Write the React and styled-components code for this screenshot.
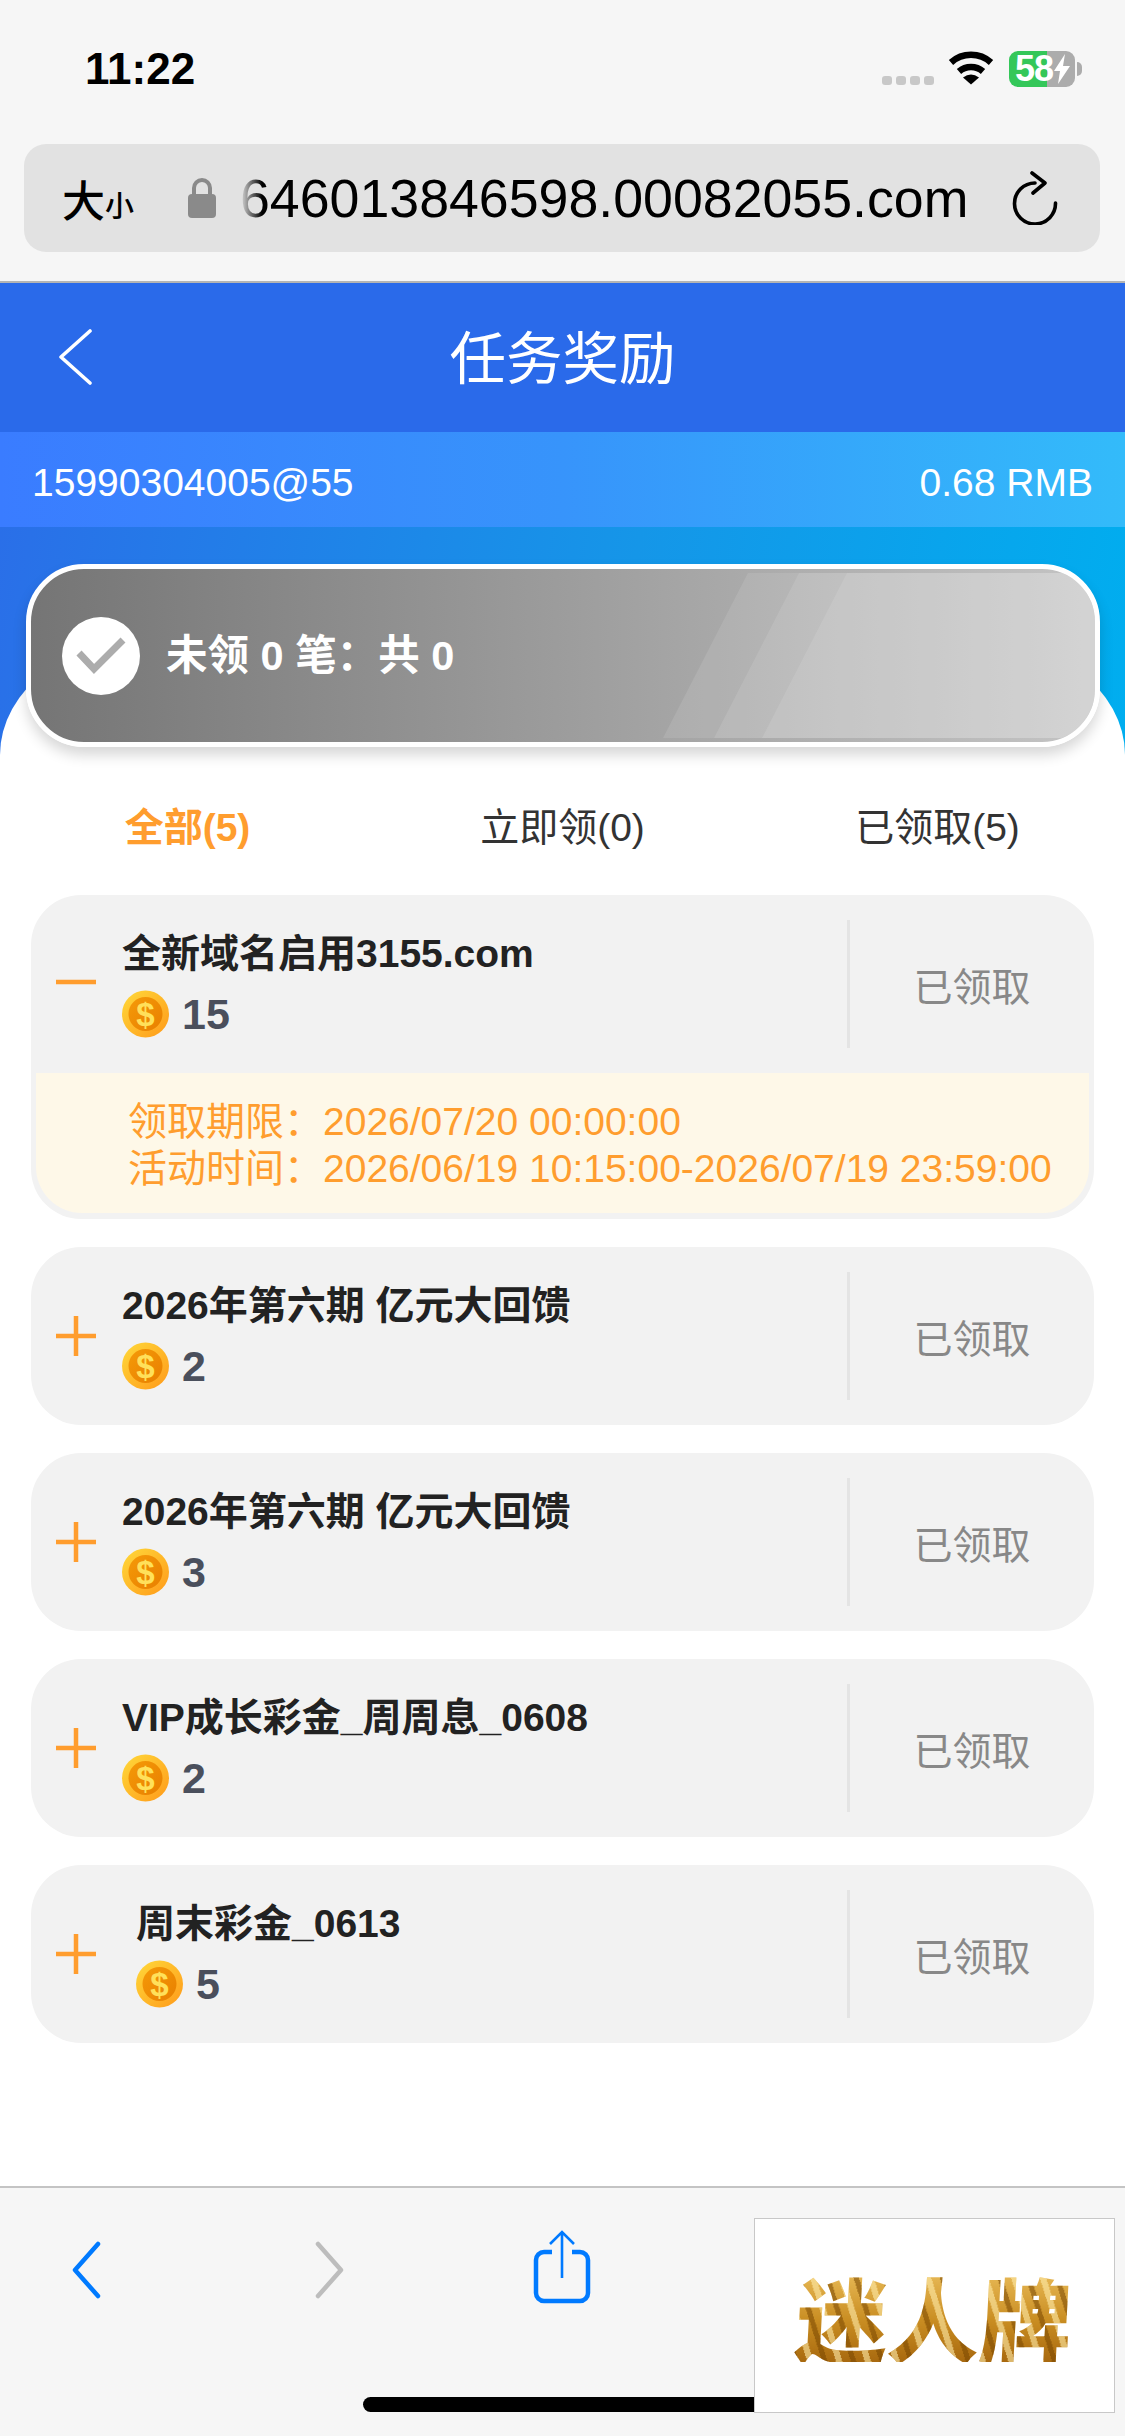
import React from 'react';
import styled, { createGlobalStyle } from 'styled-components';

const GlobalStyle = createGlobalStyle`
  html, body {
    margin: 0;
    padding: 0;
    background: #fff;
  }
  * {
    box-sizing: border-box;
  }
`;

const FONT = `"Liberation Sans", "Noto Sans CJK SC", sans-serif`;
const ORANGE = '#ff9d2e';

const Page = styled.div`
  position: relative;
  width: 1125px;
  height: 2436px;
  overflow: hidden;
  display: flex;
  flex-direction: column;
  background: #fff;
  font-family: ${FONT};
  font-size: 39px;
`;

// browser chrome
const Chrome = styled.header`
  height: 283px;
  padding: 0 25px 30px 24px;
  background: #f6f6f6;
  border-bottom: 2px solid #b4b4b4;
  display: flex;
  flex-direction: column;
`;

const StatusBar = styled.div`
  height: 144px;
  flex: none;
  padding: 51px 25px 0 61px;
  display: flex;
  align-items: flex-start;
  justify-content: space-between;
`;

const Clock = styled.div`
  font-size: 44px;
  font-weight: 700;
  line-height: 36px;
  color: #000;
`;

const StatusIcons = styled.div`
  display: flex;
  align-items: flex-start;
`;

const SignalDots = styled.div`
  display: flex;
  gap: 4px;
  margin: 25px 14px 0 0;
`;

const SignalDot = styled.span`
  width: 10px;
  height: 9px;
  border-radius: 3px;
  background: #c8c8c8;
`;

const Battery = styled.div`
  position: relative;
  width: 66px;
  height: 36px;
  margin: 0 0 0 15px;
  border-radius: 9px;
  padding-left: 6px;
  display: flex;
  align-items: center;
  background: linear-gradient(90deg, #34c759 0 38px, #acacac 38px);
  color: #fff;
  font-size: 36px;
  font-weight: 700;
  letter-spacing: -1px;

  &::after {
    content: '';
    position: absolute;
    top: 11px;
    right: -7px;
    width: 5px;
    height: 14px;
    border-radius: 0 5px 5px 0;
    background: #acacac;
  }
`;

const UrlBar = styled.div`
  height: 108px;
  flex: none;
  padding: 0 26px 0 38px;
  display: flex;
  align-items: center;
  border-radius: 22px;
  background: #e2e2e2;
`;

const TextSize = styled.div`
  width: 126px;
  flex: none;
  display: flex;
  align-items: baseline;
  color: #000;
  font-size: 43px;
  font-weight: 500;
`;

const TextSizeSmall = styled.span`
  font-size: 29px;
`;

const UrlText = styled.div`
  width: 744px;
  margin-left: 24px;
  flex: none;
  font-size: 53.7px;
  white-space: nowrap;
  color: #000;
  -webkit-mask-image: linear-gradient(90deg, transparent 0, #000 22px);
  mask-image: linear-gradient(90deg, transparent 0, #000 22px);
`;

const Reload = styled.svg`
  margin-left: 28px;
  flex: none;
`;

// page header
const TitleBar = styled.div`
  height: 149px;
  flex: none;
  padding: 0 0 7px 57px;
  position: relative;
  display: flex;
  align-items: center;
  justify-content: center;
  background: #2a6aea;
`;

const BackLink = styled.svg`
  position: absolute;
  left: 57px;
  top: 46px;
`;

const Title = styled.h1`
  margin: 0 57px 0 0;
  font-size: 56.5px;
  font-weight: 400;
  color: #fff;
`;

const AccountBar = styled.div`
  height: 95px;
  flex: none;
  padding: 6px 32px 0 32px;
  display: flex;
  align-items: center;
  justify-content: space-between;
  color: #fff;
  background: linear-gradient(90deg, #3a7cff 0%, #3794fb 50%, #33bbfa 100%);
`;

const Hero = styled.section`
  height: 233px;
  flex: none;
  padding: 37px 25px 0 26px;
  background: linear-gradient(100deg, #2a6fe8 0%, #1596e8 55%, #00aeef 100%);
`;

const SummaryShell = styled.div`
  position: relative;
  z-index: 1;
  border-radius: 58px;
  box-shadow: 0 8px 14px rgba(0, 0, 0, 0.16);
`;

const SummaryCard = styled.div`
  position: relative;
  height: 183px;
  padding-left: 31px;
  display: flex;
  align-items: center;
  gap: 26px;
  overflow: hidden;
  border: 5px solid #fff;
  border-radius: 58px;
  background: linear-gradient(90deg, #757575 0%, #a6a6a6 62%, #c4c4c4 100%);
  color: #fff;
  font-size: 41.5px;
  font-weight: 700;
`;

const Sheen = styled.span`
  position: absolute;
  top: 4px;
  bottom: 4px;
  left: ${({ $left }) => $left}px;
  right: 0;
  clip-path: polygon(85px 0, 100% 0, 100% 100%, 0 100%);
  background: rgba(255, 255, 255, 0.1);
`;

const CheckCircle = styled.div`
  width: 78px;
  height: 78px;
  flex: none;
  display: flex;
  align-items: center;
  justify-content: center;
  border-radius: 50%;
  background: #fff;
`;

const SummaryText = styled.span`
  position: relative;
  top: -4px;
  white-space: pre;
`;

// white sheet under the hero
const Sheet = styled.main`
  margin-top: -125px;
  padding-top: 142px;
  flex: 1;
  border-radius: 160px 160px 0 0 / 120px 120px 0 0;
  background: #fff;
`;

const Tabs = styled.nav`
  height: 94px;
  margin-bottom: 24px;
  display: grid;
  grid-template-columns: repeat(3, 1fr);
`;

const Tab = styled.div`
  display: flex;
  align-items: center;
  justify-content: center;
  color: ${({ $active }) => ($active ? ORANGE : '#333')};
  font-weight: ${({ $active }) => ($active ? 700 : 400)};
`;

const List = styled.div`
  padding: 0 31px;
  display: flex;
  flex-direction: column;
  gap: 28px;
`;

const Card = styled.article`
  border-radius: 50px;
  background: #f2f2f2;
  padding-bottom: ${({ $open }) => ($open ? 6 : 0)}px;
`;

const CardHead = styled.div`
  height: 178px;
  display: flex;
  align-items: center;
`;

const Toggle = styled.svg`
  width: 40px;
  height: 40px;
  flex: none;
  margin: 0 0 0 25px;
`;

const CardBody = styled.div`
  width: 751px;
  flex: none;
  padding-left: ${({ $indent }) => 26 + $indent}px;
  display: flex;
  flex-direction: column;
  gap: 12px;
`;

const CardTitle = styled.div`
  height: 48px;
  line-height: 48px;
  font-weight: 700;
  color: #222;
  white-space: pre;
`;

const Reward = styled.div`
  height: 48px;
  display: flex;
  align-items: center;
  gap: 13px;
  font-size: 43px;
  font-weight: 700;
  color: #4a4f5c;
`;

const Claim = styled.div`
  flex: 1;
  height: 128px;
  display: flex;
  align-items: center;
  justify-content: center;
  border-left: 3px solid #e4e4e4;
  color: #888;
`;

const Details = styled.div`
  margin: 0 5px;
  padding: 25px 0 21px 92px;
  border-radius: 0 0 46px 46px;
  background: #fef8e8;
  color: ${ORANGE};
  line-height: 47px;
  white-space: pre;
`;

// browser toolbar
const Toolbar = styled.footer`
  height: 250px;
  flex: none;
  padding: 43px 0 0 70px;
  display: flex;
  align-items: flex-start;
  border-top: 2px solid #c4c4c4;
  background: #f6f6f6;
`;

const ToolIcon = styled.svg`
  flex: none;
  margin-left: ${({ $gap }) => $gap}px;
  margin-top: ${({ $top }) => $top}px;
`;

const HomeIndicator = styled.div`
  position: absolute;
  left: 363px;
  top: 2397px;
  width: 400px;
  height: 15px;
  border-radius: 8px;
  background: #000;
`;

const AdBox = styled.aside`
  position: absolute;
  left: 754px;
  top: 2218px;
  width: 361px;
  height: 195px;
  display: flex;
  align-items: center;
  justify-content: center;
  border: 1px solid #c8c8c8;
  background: #fff;
`;

const AdText = styled.span`
  font-family: "Noto Sans CJK SC", sans-serif;
  font-size: 92px;
  font-weight: 900;
  line-height: 1;
  color: transparent;
  background:
    repeating-linear-gradient(70deg, rgba(120, 70, 0, 0.55) 0 5px, transparent 5px 13px, rgba(255, 236, 170, 0.6) 13px 19px, transparent 19px 27px),
    linear-gradient(180deg, #e9bb58 0%, #c98d22 55%, #a8690f 100%);
  -webkit-background-clip: text;
  background-clip: text;
  transform: skewX(-3deg);
`;

const Coin = () => (
  <svg width="47" height="48" viewBox="0 0 47 48">
    <defs>
      <linearGradient id="coinRim" x1="0" y1="0" x2="1" y2="1">
        <stop offset="0" stopColor="#ffd93a" />
        <stop offset="1" stopColor="#ff9a1a" />
      </linearGradient>
      <linearGradient id="coinFace" x1="0" y1="0" x2="1" y2="1">
        <stop offset="0" stopColor="#f59a08" />
        <stop offset="1" stopColor="#e87f00" />
      </linearGradient>
    </defs>
    <circle cx="23.5" cy="24" r="23.5" fill="url(#coinRim)" />
    <circle cx="23.5" cy="24" r="17" fill="url(#coinFace)" />
    <text x="23.5" y="36" textAnchor="middle" fontFamily="Liberation Sans" fontWeight="700" fontSize="33" fill="#ffe05a">$</text>
  </svg>
);

const items = [
  { id: 1, title: '全新域名启用3155.com', amount: 15, open: true },
  { id: 2, title: '2026年第六期 亿元大回馈', amount: 2 },
  { id: 3, title: '2026年第六期 亿元大回馈', amount: 3 },
  { id: 4, title: 'VIP成长彩金_周周息_0608', amount: 2 },
  { id: 5, title: '周末彩金_0613', amount: 5, indent: 14 },
];

const TaskCard = ({ title, amount, open, indent = 0 }) => (
  <Card $open={open}>
    <CardHead>
      <Toggle viewBox="0 0 40 40">
        <path d={open ? 'M0 18h40' : 'M0 20h40M20 0v40'} stroke={ORANGE} strokeWidth="4.5" fill="none" />
      </Toggle>
      <CardBody $indent={indent}>
        <CardTitle>{title}</CardTitle>
        <Reward>
          <Coin />
          {amount}
        </Reward>
      </CardBody>
      <Claim>已领取</Claim>
    </CardHead>
    {open && (
      <Details>
        {'领取期限：2026/07/20 00:00:00\n活动时间：2026/06/19 10:15:00-2026/07/19 23:59:00'}
      </Details>
    )}
  </Card>
);

const App = () => {
  return (
    <Page>
      <GlobalStyle />
      <Chrome>
        <StatusBar>
          <Clock>11:22</Clock>
          <StatusIcons>
            <SignalDots>
              <SignalDot />
              <SignalDot />
              <SignalDot />
              <SignalDot />
            </SignalDots>
            <svg width="46" height="34" viewBox="0 0 46 34">
              <path d="M3 11.5A30 30 0 0 1 43 11.5" stroke="#000" strokeWidth="6.5" fill="none" />
              <path d="M11 20.5A18 18 0 0 1 35 20.5" stroke="#000" strokeWidth="6.5" fill="none" />
              <path d="M23 33.5L15 26.5Q23 20.5 31 26.5Z" fill="#000" />
            </svg>
            <Battery>
              58
              <svg width="18" height="30" viewBox="0 0 18 30">
                <path d="M12 0L1 17h6L5 30 17 12h-7z" fill="#fff" />
              </svg>
            </Battery>
          </StatusIcons>
        </StatusBar>
        <UrlBar>
          <TextSize>
            大<TextSizeSmall>小</TextSizeSmall>
          </TextSize>
          <svg width="28" height="40" viewBox="0 0 28 40">
            <path d="M6 17V10a8 8 0 0 1 16 0v7" stroke="#8a8a8a" strokeWidth="4" fill="none" />
            <rect x="0" y="16" width="28" height="24" rx="4" fill="#8a8a8a" />
          </svg>
          <UrlText>646013846598.00082055.com</UrlText>
          <Reload width="46" height="54" viewBox="0 0 46 54">
            <path d="M23 12A20.5 20.5 0 1 0 43.5 32" stroke="#000" strokeWidth="3.6" strokeLinecap="round" fill="none" />
            <path d="M20 2L33 12 21 22" stroke="#000" strokeWidth="3.6" strokeLinecap="round" strokeLinejoin="round" fill="none" />
          </Reload>
        </UrlBar>
      </Chrome>

      <TitleBar>
        <BackLink width="36" height="56" viewBox="0 0 36 56">
          <path d="M33 2L4 28L33 54" stroke="#fff" strokeWidth="3.6" strokeLinecap="round" strokeLinejoin="round" fill="none" />
        </BackLink>
        <Title>任务奖励</Title>
      </TitleBar>

      <AccountBar>
        <span>15990304005@55</span>
        <span>0.68 RMB</span>
      </AccountBar>

      <Hero>
        <SummaryShell>
          <SummaryCard>
            <Sheen $left={632} />
            <Sheen $left={683} />
            <Sheen $left={731} />
            <CheckCircle>
              <svg width="50" height="40" viewBox="0 0 50 40">
                <path d="M3 17L18 33 47 4" stroke="#acacac" strokeWidth="7" fill="none" />
              </svg>
            </CheckCircle>
            <SummaryText>未领 0 笔：共 0</SummaryText>
          </SummaryCard>
        </SummaryShell>
      </Hero>

      <Sheet>
        <Tabs>
          <Tab $active>全部(5)</Tab>
          <Tab>立即领(0)</Tab>
          <Tab>已领取(5)</Tab>
        </Tabs>
        <List>
          {items.map((item) => (
            <TaskCard key={item.id} {...item} />
          ))}
        </List>
      </Sheet>

      <Toolbar>
        <ToolIcon width="32" height="58" viewBox="0 0 32 58" $top={10}>
          <path d="M28 3L5 29l23 26" stroke="#007aff" strokeWidth="4.5" strokeLinecap="round" strokeLinejoin="round" fill="none" />
        </ToolIcon>
        <ToolIcon width="32" height="58" viewBox="0 0 32 58" $gap={212} $top={10}>
          <path d="M4 3l23 26L4 55" stroke="#bdbdbd" strokeWidth="4.5" strokeLinecap="round" strokeLinejoin="round" fill="none" />
        </ToolIcon>
        <ToolIcon width="58" height="74" viewBox="0 0 58 74" $gap={187} $top={-1}>
          <path d="M19 22H11a8 8 0 0 0-8 8v33a8 8 0 0 0 8 8h36a8 8 0 0 0 8-8V30a8 8 0 0 0-8-8h-8" stroke="#007aff" strokeWidth="4.5" fill="none" />
          <path d="M29 48V2M17 14L29 2l12 12" stroke="#007aff" strokeWidth="2.6" fill="none" />
        </ToolIcon>
      </Toolbar>

      <HomeIndicator />
      <AdBox>
        <AdText>迷人牌</AdText>
      </AdBox>
    </Page>
  );
};

export default App;
